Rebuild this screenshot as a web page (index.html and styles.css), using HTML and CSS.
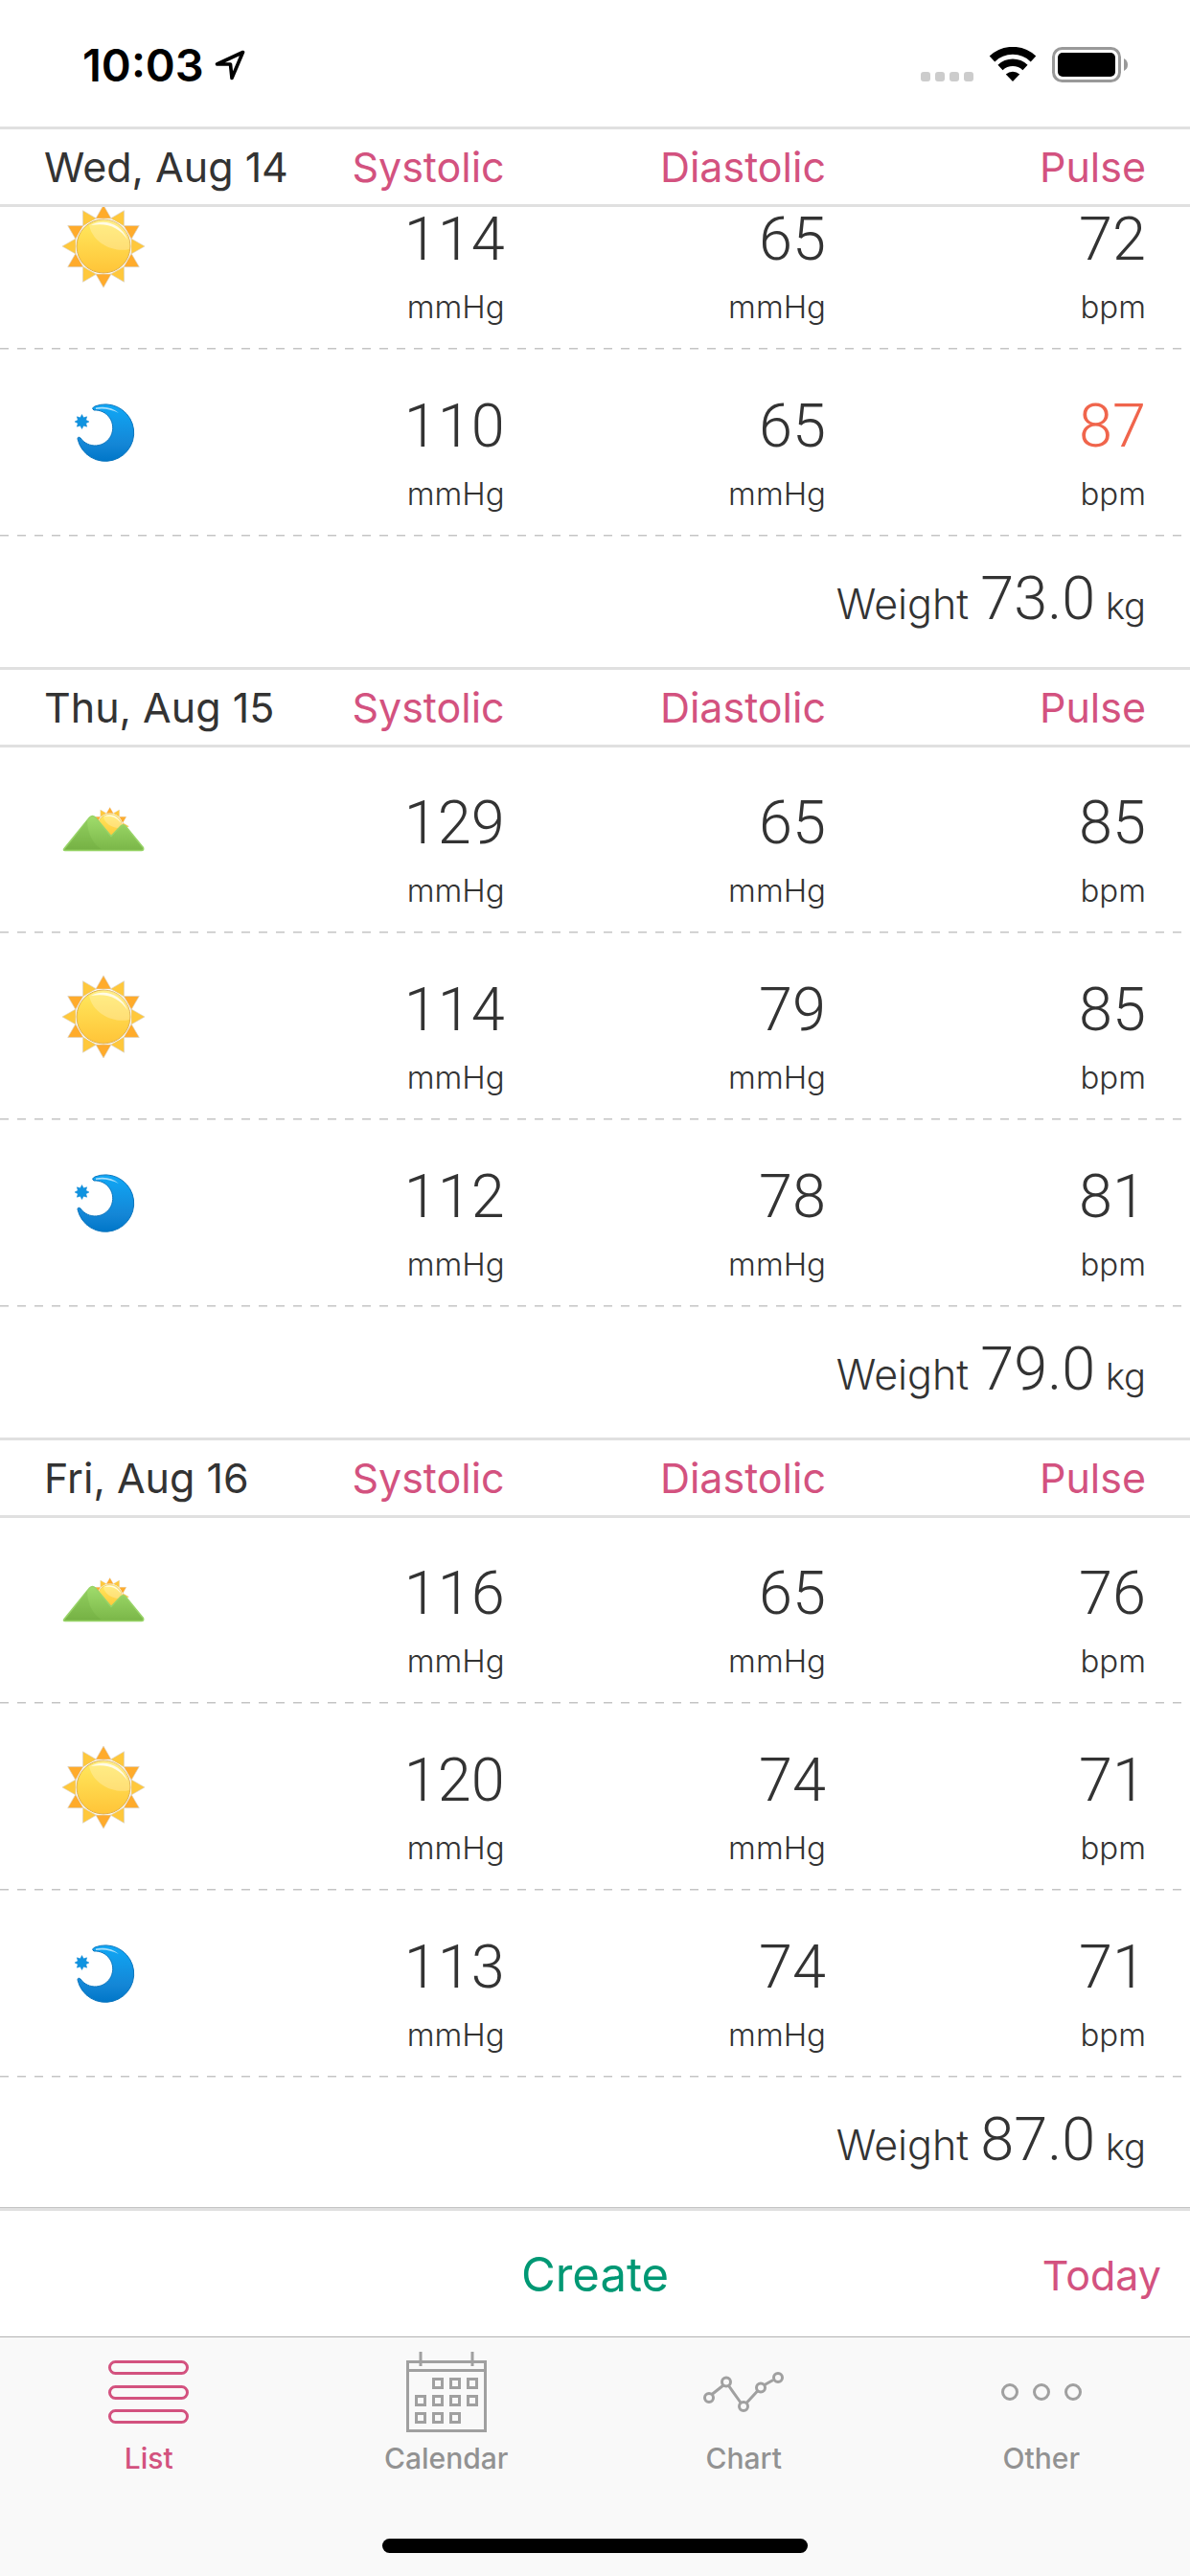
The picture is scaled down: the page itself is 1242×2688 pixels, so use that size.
FILE: index.html
```html
<!DOCTYPE html>
<html lang="en">

<head>
    <meta charset="UTF-8">
    <meta name="viewport" content="width=device-width, initial-scale=1.0">
    <title>Blood Pressure</title>
    <link rel="stylesheet" href="styles.css">
</head>

<body>
    <!-- Shared icons -->
    <svg class="symbols" aria-hidden="true">
        <defs>
            <linearGradient id="sun-fill" x1="0" y1="0" x2="0" y2="1">
                <stop offset="0" stop-color="#ffe95e" />
                <stop offset="1" stop-color="#ffc438" />
            </linearGradient>
            <linearGradient id="moon-fill" x1="0" y1="0" x2="0" y2="1">
                <stop offset="0" stop-color="#10a8f6" />
                <stop offset="0.7" stop-color="#1486d6" />
                <stop offset="1" stop-color="#0076c8" />
            </linearGradient>
            <linearGradient id="hill-fill" x1="0" y1="0" x2="0" y2="1">
                <stop offset="0" stop-color="#a0dc6c" />
                <stop offset="1" stop-color="#7ab648" />
            </linearGradient>
        </defs>
        <symbol id="sun" viewBox="0 0 90 90">
            <g id="sun-shape" stroke="#d8d0c4" stroke-width="0.6">
                <g id="rays-orange" fill="#ffab2b">
                    <path id="ray" d="M45 2l8 14H37z" />
                    <use href="#ray" transform="rotate(60 45 45)" />
                    <use href="#ray" transform="rotate(120 45 45)" />
                    <use href="#ray" transform="rotate(180 45 45)" />
                    <use href="#ray" transform="rotate(240 45 45)" />
                    <use href="#ray" transform="rotate(300 45 45)" />
                </g>
                <g fill="#ffc83c">
                    <path id="ray-light" d="M45 2l8 14H37z" transform="rotate(30 45 45)" />
                    <use href="#ray-light" transform="rotate(60 45 45)" />
                    <use href="#ray-light" transform="rotate(120 45 45)" />
                    <use href="#ray-light" transform="rotate(180 45 45)" />
                    <use href="#ray-light" transform="rotate(240 45 45)" />
                    <use href="#ray-light" transform="rotate(300 45 45)" />
                </g>
                <circle cx="45" cy="45" r="29" fill="#fff" stroke="none" />
                <circle cx="45" cy="45" r="28" fill="url(#sun-fill)" stroke="#dcae50" stroke-width="1" />
                <path d="M30 23a26 26 0 0 1 42 25c-16 4-38-6-42-25z" fill="#fff" opacity="0.25" stroke="none" />
                <path d="M32 23c14-8 32-1 38 15c-8-12-20-18-38-15z" fill="#fff" opacity="0.8" stroke="none" />
            </g>
        </symbol>
        <symbol id="sunrise" viewBox="0 0 90 90">
            <use href="#sun-shape" transform="translate(31 20.500) scale(0.460)" />
            <path d="M4 64.500L30.500 32q3-3 6 0L53 51.500L63 41q2.500-2.500 5 0L86.500 63.500q1 3-2 3H5q-2.500 0-1-2z" fill="url(#hill-fill)" stroke="#98d468" stroke-width="1.500" stroke-linejoin="round" />
            <path d="M28 35C28 48 34 60 43 65H5.500z" fill="#5f9c30" opacity="0.180" />
        </symbol>
        <symbol id="moon" viewBox="0 0 90 90">
            <path d="M36 17A29.700 29.700 0 1 1 18 51q0-3 3-1A18.500 18.500 0 1 0 35 21q-3-2 1-4z" fill="url(#moon-fill)" stroke="#0d76be" stroke-width="1" />
            <path d="M37 18.500q14-3 24 5.500q-12-6-24-4z" fill="#fff" opacity="0.650" />
            <path d="M22.500 25.500l1.700 3.300 3.500-1-1 3.500 3.300 1.700-3.300 1.700 1 3.500-3.500-1-1.700 3.300-1.700-3.300-3.500 1 1-3.500-3.300-1.700 3.300-1.700-1-3.500 3.500 1z" fill="#0f93e0" stroke="#1486d0" stroke-width="0.500" />
        </symbol>
    </svg>

    <div class="app">
        <header class="status-bar">
            <div class="clock">
                <time>10:03</time>
                <svg class="location" viewBox="0 0 34 34" aria-hidden="true">
                    <path d="M30.500 3.500L3.500 16H17.500L19 30.500z" fill="none" stroke="#000" stroke-width="3.600" stroke-linejoin="round" />
                </svg>
            </div>
            <div class="indicators" aria-hidden="true">
                <svg class="signal" viewBox="0 0 55 37">
                    <g fill="#ccc">
                        <rect x="0" y="26" width="10" height="10" rx="3" />
                        <rect x="15" y="26" width="10" height="10" rx="3" />
                        <rect x="30" y="26" width="10" height="10" rx="3" />
                        <rect x="45" y="26" width="10" height="10" rx="3" />
                    </g>
                </svg>
                <svg class="wifi" viewBox="0 0 50 37">
                    <path d="M3.500 12.500a31 31 0 0 1 43 0" fill="none" stroke="#000" stroke-width="8" />
                    <path d="M12 21.500a19 19 0 0 1 26 0" fill="none" stroke="#000" stroke-width="7.500" />
                    <path d="M17.800 28.500a10.500 10.500 0 0 1 14.400 0L25 36z" />
                </svg>
                <svg class="battery" viewBox="0 0 80 37">
                    <rect x="1.500" y="1.500" width="69" height="34" rx="9" fill="none" stroke="#999" stroke-width="3" />
                    <rect x="6" y="6" width="60" height="25" rx="5" />
                    <path d="M75 12q4 2 4 6.500t-4 6.500z" fill="#999" />
                </svg>
            </div>
        </header>

        <main class="log" id="log">
            <table>
                <thead>
                    <tr>
                        <th class="date" scope="col">Wed, Aug 14</th>
                        <th scope="col">Systolic</th>
                        <th scope="col">Diastolic</th>
                        <th scope="col">Pulse</th>
                    </tr>
                </thead>
                <tbody>
                    <tr>
                        <td class="period"><svg role="img" aria-label="Noon"><use href="#sun" /></svg></td>
                        <td><div class="value">114</div><div class="unit">mmHg</div></td>
                        <td><div class="value">65</div><div class="unit">mmHg</div></td>
                        <td><div class="value">72</div><div class="unit">bpm</div></td>
                    </tr>
                    <tr>
                        <td class="period"><svg role="img" aria-label="Night"><use href="#moon" /></svg></td>
                        <td><div class="value">110</div><div class="unit">mmHg</div></td>
                        <td><div class="value">65</div><div class="unit">mmHg</div></td>
                        <td><div class="value high">87</div><div class="unit">bpm</div></td>
                    </tr>
                </tbody>
                <tfoot>
                    <tr>
                        <td class="weight" colspan="4">Weight <span class="value">73.0</span><span class="kg"> kg</span></td>
                    </tr>
                </tfoot>
            </table>

            <table>
                <thead>
                    <tr>
                        <th class="date" scope="col">Thu, Aug 15</th>
                        <th scope="col">Systolic</th>
                        <th scope="col">Diastolic</th>
                        <th scope="col">Pulse</th>
                    </tr>
                </thead>
                <tbody>
                    <tr>
                        <td class="period"><svg role="img" aria-label="Morning"><use href="#sunrise" /></svg></td>
                        <td><div class="value">129</div><div class="unit">mmHg</div></td>
                        <td><div class="value">65</div><div class="unit">mmHg</div></td>
                        <td><div class="value">85</div><div class="unit">bpm</div></td>
                    </tr>
                    <tr>
                        <td class="period"><svg role="img" aria-label="Noon"><use href="#sun" /></svg></td>
                        <td><div class="value">114</div><div class="unit">mmHg</div></td>
                        <td><div class="value">79</div><div class="unit">mmHg</div></td>
                        <td><div class="value">85</div><div class="unit">bpm</div></td>
                    </tr>
                    <tr>
                        <td class="period"><svg role="img" aria-label="Night"><use href="#moon" /></svg></td>
                        <td><div class="value">112</div><div class="unit">mmHg</div></td>
                        <td><div class="value">78</div><div class="unit">mmHg</div></td>
                        <td><div class="value">81</div><div class="unit">bpm</div></td>
                    </tr>
                </tbody>
                <tfoot>
                    <tr>
                        <td class="weight" colspan="4">Weight <span class="value">79.0</span><span class="kg"> kg</span></td>
                    </tr>
                </tfoot>
            </table>

            <table>
                <thead>
                    <tr>
                        <th class="date" scope="col">Fri, Aug 16</th>
                        <th scope="col">Systolic</th>
                        <th scope="col">Diastolic</th>
                        <th scope="col">Pulse</th>
                    </tr>
                </thead>
                <tbody>
                    <tr>
                        <td class="period"><svg role="img" aria-label="Morning"><use href="#sunrise" /></svg></td>
                        <td><div class="value">116</div><div class="unit">mmHg</div></td>
                        <td><div class="value">65</div><div class="unit">mmHg</div></td>
                        <td><div class="value">76</div><div class="unit">bpm</div></td>
                    </tr>
                    <tr>
                        <td class="period"><svg role="img" aria-label="Noon"><use href="#sun" /></svg></td>
                        <td><div class="value">120</div><div class="unit">mmHg</div></td>
                        <td><div class="value">74</div><div class="unit">mmHg</div></td>
                        <td><div class="value">71</div><div class="unit">bpm</div></td>
                    </tr>
                    <tr>
                        <td class="period"><svg role="img" aria-label="Night"><use href="#moon" /></svg></td>
                        <td><div class="value">113</div><div class="unit">mmHg</div></td>
                        <td><div class="value">74</div><div class="unit">mmHg</div></td>
                        <td><div class="value">71</div><div class="unit">bpm</div></td>
                    </tr>
                </tbody>
                <tfoot>
                    <tr>
                        <td class="weight" colspan="4">Weight <span class="value">87.0</span><span class="kg"> kg</span></td>
                    </tr>
                </tfoot>
            </table>
        </main>

        <div class="toolbar">
            <button class="create-btn" type="button">Create</button>
            <button class="today-btn" type="button">Today</button>
        </div>

        <footer class="bottom">
            <nav class="tabs">
                <a class="tab active" href="#list" aria-current="page">
                    <svg viewBox="0 0 84 90" aria-hidden="true">
                        <rect x="1.500" y="13.500" width="81" height="12" rx="6" />
                        <rect x="1.500" y="39.500" width="81" height="12" rx="6" />
                        <rect x="1.500" y="64.500" width="81" height="12" rx="6" />
                    </svg>
                    List
                </a>
                <a class="tab" href="#calendar">
                    <svg viewBox="0 0 84 90" aria-hidden="true">
                        <path d="M1.500 13.500h81v72h-81zM1.500 22.500h81M15 3v15M69 3v15" />
                        <path d="M28.500 31.500h9v9h-9zM46.500 31.500h9v9h-9zM64.500 31.500h9v9h-9zM10.500 49.500h9v9h-9zM28.500 49.500h9v9h-9zM46.500 49.500h9v9h-9zM64.500 49.500h9v9h-9zM10.500 67.500h9v9h-9zM28.500 67.500h9v9h-9zM46.500 67.500h9v9h-9z" />
                    </svg>
                    Calendar
                </a>
                <a class="tab" href="#chart">
                    <svg viewBox="0 0 84 90" aria-hidden="true">
                        <path d="M9 47.500l12-9.500M26.500 38.500L39 56M45.500 56l12-13M64 37.500l9-5" />
                        <circle cx="6" cy="51" r="4.500" />
                        <circle cx="24" cy="34.500" r="4.500" />
                        <circle cx="42" cy="60" r="4.500" />
                        <circle cx="60" cy="40.500" r="4.500" />
                        <circle cx="78" cy="30" r="4.500" />
                    </svg>
                    Chart
                </a>
                <a class="tab" href="#other">
                    <svg viewBox="0 0 84 90" aria-hidden="true">
                        <circle cx="9" cy="45" r="7.500" />
                        <circle cx="42" cy="45" r="7.500" />
                        <circle cx="75" cy="45" r="7.500" />
                    </svg>
                    Other
                </a>
            </nav>
            <div class="home-indicator"></div>
        </footer>
    </div>

    <script>
        // Start just below the top of the first day, the day header stays pinned
        document.getElementById('log').scrollTop = 45;
    </script>
</body>

</html>
```
FILE: styles.css
```css
body {
    font-family: Inter, "Liberation Sans", sans-serif;
    background-color: #fff;
    margin: 0;
    color: #333;
}

.symbols {
    position: absolute;
    width: 0;
    height: 0;
}

.app {
    display: flex;
    flex-direction: column;
    height: 100vh;
}

/* Status bar */
.status-bar {
    display: flex;
    justify-content: space-between;
    align-items: flex-start;
    flex-shrink: 0;
    box-sizing: border-box;
    height: 132px;
    padding: 49px 64px 0 86px;
    color: #000;
}

.clock {
    display: flex;
    align-items: center;
    gap: 10px;
    font-size: 47px;
    font-weight: 600;
    line-height: 38px;
}

.location {
    width: 34px;
    height: 34px;
}

.indicators {
    display: flex;
    gap: 16px;
}

.indicators svg {
    height: 37px;
}

.signal {
    width: 55px;
}

.wifi {
    width: 50px;
}

.battery {
    width: 80px;
}

/* Measurements */
.log {
    flex: 1;
    min-height: 0;
    overflow-y: auto;
    scrollbar-width: none;
}

table {
    width: 100%;
    table-layout: fixed;
    border-collapse: separate;
    border-spacing: 0;
}

th,
td {
    padding: 0;
    text-align: right;
    vertical-align: top;
}

th:last-child,
td:last-child {
    padding-right: 46px;
}

thead {
    position: sticky;
    top: 0;
    z-index: 1;
}

th {
    box-sizing: border-box;
    width: 27%;
    height: 84px;
    background-color: #fff;
    border-top: 3px solid #e0e0e0;
    border-bottom: 3px solid #e0e0e0;
    color: #d3527f;
    font-size: 43px;
    font-weight: 400;
    line-height: 78px;
    white-space: nowrap;
}

th:nth-child(2) {
    width: 17%;
}

th:nth-child(4) {
    width: 380px;
}

th.date {
    width: auto;
    padding-left: 46px;
    color: #333;
    text-align: left;
}

/* Dashed rule under each reading */
tbody tr {
    height: 195px;
    background:
        repeating-linear-gradient(90deg, #c4c4c4 0 9px, transparent 9px 18px) 0 192px / 100% 1px no-repeat,
        repeating-linear-gradient(90deg, #e2e2e2 0 9px, transparent 9px 18px) 0 193px / 100% 1px no-repeat;
}

tbody td {
    padding-top: 41px;
}

td.period {
    padding-left: 63px;
    text-align: left;
}

.period svg {
    display: block;
    width: 90px;
    height: 90px;
}

.value {
    font-family: Roboto, "Liberation Sans", sans-serif;
    font-size: 63px;
    font-weight: 300;
    line-height: 76px;
}

.high {
    color: #f0654c;
}

.unit {
    margin-top: 12px;
    font-size: 33px;
    font-weight: 300;
    line-height: 40px;
}

td.weight {
    height: 80px;
    padding-top: 29px;
    padding-bottom: 26px;
    font-size: 43px;
    font-weight: 300;
    line-height: 80px;
}

.weight .value {
    line-height: 62px;
}

.kg {
    font-size: 38px;
    line-height: 62px;
}

/* Toolbar */
.toolbar {
    display: grid;
    grid-template-columns: 1fr auto 1fr;
    align-items: center;
    flex-shrink: 0;
    box-sizing: border-box;
    height: 135px;
    padding: 5px 30px 0;
    border-top: 1px solid #c4c4c4;
    box-shadow: inset 0 3px #e0e0e0;
}

.toolbar button {
    padding: 0;
    border: none;
    background: none;
    font-family: inherit;
    cursor: pointer;
}

.create-btn {
    grid-column: 2;
    color: #009874;
    font-size: 49px;
}

.today-btn {
    justify-self: end;
    color: #d3527f;
    font-size: 43px;
}

/* Tab bar */
.bottom {
    flex-shrink: 0;
    box-sizing: border-box;
    height: 250px;
    padding-top: 12px;
    background-color: #f9f9f9;
    border-top: 1px solid #b2b2b2;
}

.tabs {
    display: flex;
}

.tab {
    display: flex;
    flex: 1;
    flex-direction: column;
    align-items: center;
    gap: 6px;
    color: #929292;
    font-size: 30px;
    font-weight: 500;
    line-height: 36px;
    text-decoration: none;
}

.tab svg {
    width: 84px;
    height: 90px;
    fill: none;
    stroke: #a0a0a0;
    stroke-width: 3;
}

.tab.active {
    color: #d3527f;
}

.tab.active svg {
    stroke: #d3527f;
}

.home-indicator {
    width: 444px;
    height: 15px;
    margin: 66px auto 0;
    border-radius: 8px;
    background-color: #000;
}
```
